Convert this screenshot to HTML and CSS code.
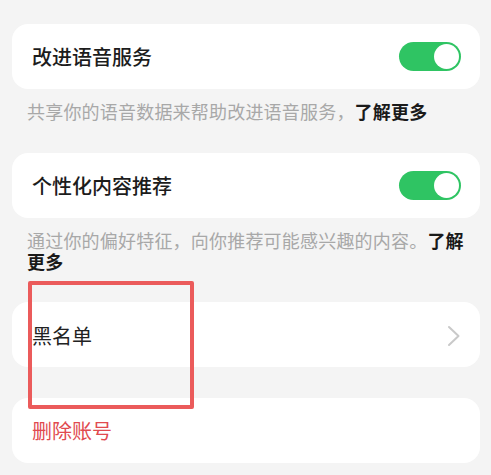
FILE: index.html
```html
<!DOCTYPE html>
<html lang="zh-CN">
<head>
<meta charset="utf-8">
<link rel="stylesheet" href="styles.css">
</head>
<body>
<main class="page">
  <div class="card">
    <span class="title">改进语音服务</span>
    <span class="toggle"><span class="knob"></span></span>
  </div>
  <p class="caption">共享你的语音数据来帮助改进语音服务，<b class="more">了解更多</b></p>

  <div class="card card-second">
    <span class="title">个性化内容推荐</span>
    <span class="toggle"><span class="knob"></span></span>
  </div>
  <p class="caption">通过你的偏好特征，向你推荐可能感兴趣的内容。<b class="more">了解更多</b></p>

  <div class="card card-third">
    <span class="title title-plain">黑名单</span>
    <svg class="chevron" width="14" height="22" viewBox="0 0 14 22"><path d="M2 2 L11.5 11 L2 20" fill="none" stroke="#c9c9c9" stroke-width="2" stroke-linecap="round" stroke-linejoin="round"/></svg>
  </div>

  <div class="card card-fourth">
    <span class="title danger">删除账号</span>
  </div>

  <div class="highlight"></div>
</main>
</body>
</html>
```

FILE: styles.css
```css
* { box-sizing: border-box; }
html, body { margin: 0; padding: 0; }
body {
  background: #f4f4f4;
  font-family: "Noto Sans CJK SC", "Noto Sans", sans-serif;
  width: 491px;
  height: 475px;
  overflow: hidden;
}
.page {
  position: relative;
  padding: 24px 11px 0 12px;
  display: flex;
  flex-direction: column;
}
.card {
  height: 65px;
  background: #ffffff;
  border-radius: 16px;
  display: flex;
  align-items: center;
  justify-content: space-between;
  padding: 0 19px 0 20px;
}
.card-second { margin-top: 31px; }
.card-third { margin-top: 30px; height: 65px; padding-top: 2px; }
.card-fourth { margin-top: 31px; }
.title {
  font-size: 20px;
  font-weight: 500;
  color: #1c1c1c;
  line-height: 1;
}
.title-plain { font-weight: 400; color: #222; }
.danger { color: #e14a4f; font-weight: 400; }
.toggle {
  width: 62px;
  height: 29px;
  border-radius: 15px;
  background: #2fc463;
  display: flex;
  align-items: center;
  justify-content: flex-end;
  padding: 0 2px;
}
.knob {
  width: 25px;
  height: 25px;
  border-radius: 50%;
  background: #ffffff;
}
.chevron { margin-right: 0; }
.caption {
  margin: 12px 0 0 0;
  padding: 0 15px;
  font-size: 18px;
  letter-spacing: 0.2px;
  line-height: 21px;
  color: #a8a8a8;
}
.more { color: #1a1a1a; font-weight: 700; }
.highlight {
  position: absolute;
  left: 28px;
  top: 281px;
  width: 166px;
  height: 128px;
  border: 4px solid #eb5b5b;
  border-radius: 2px;
}
```
